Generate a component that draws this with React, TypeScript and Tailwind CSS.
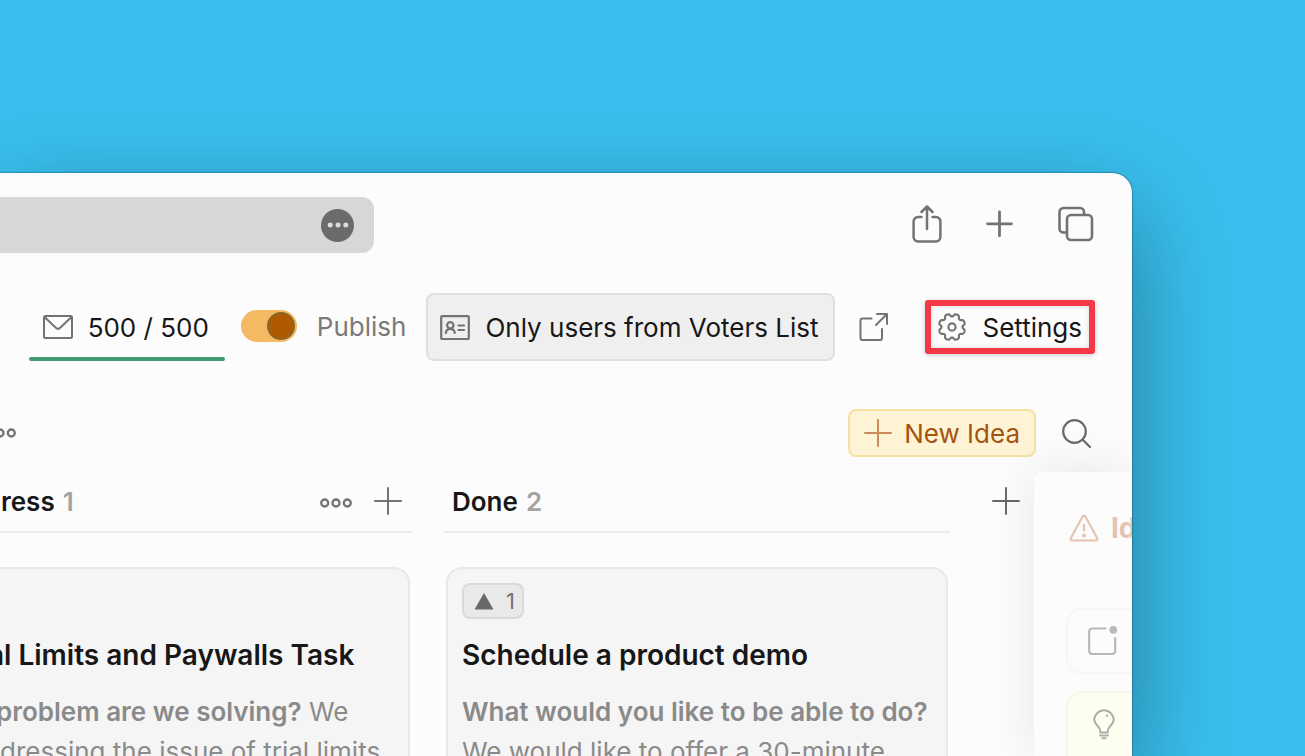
import React from "react";

type IconProps = { className?: string };

function Plus({ className = "" }: IconProps) {
  return (
    <svg viewBox="0 0 28 28" className={"size-7 shrink-0 " + className} fill="none" stroke="currentColor" strokeWidth="2" strokeLinecap="round">
      <path d="M14 1v26M1 14h26" />
    </svg>
  );
}

function Dots({ className = "" }: IconProps) {
  return (
    <svg viewBox="0 0 32 10" className={"h-[10px] w-8 shrink-0 " + className} fill="none" stroke="currentColor" strokeWidth="2.3">
      <circle cx="4.7" cy="5" r="3.5" />
      <circle cx="16" cy="5" r="3.5" />
      <circle cx="27.3" cy="5" r="3.5" />
    </svg>
  );
}

function gearPath() {
  const points: string[] = [];
  for (let i = 0; i <= 160; i++) {
    const t = (i / 160) * Math.PI * 2;
    const wave = -Math.cos(8 * t);
    const r = 11.8 + 1.5 * Math.tanh(1.7 * wave + 0.5);
    points.push(`${(15 + r * Math.sin(t)).toFixed(2)} ${(15 - r * Math.cos(t)).toFixed(2)}`);
  }
  return "M" + points.join("L") + "Z";
}

function Gear() {
  return (
    <svg viewBox="0 0 30 30" className="size-[30px] shrink-0 text-[#737373]" fill="none" stroke="currentColor" strokeWidth="2.1" strokeLinejoin="round">
      <path d={gearPath()} />
      <circle cx="15" cy="15" r="3.6" />
    </svg>
  );
}

function BrowserBar() {
  return (
    <div className="flex h-14 items-center justify-between pr-[38px]">
      <div className="flex h-14 w-[374px] items-center justify-end rounded-r-xl bg-[#d7d7d7] pr-5">
        <button aria-label="Page options" className="flex size-[33px] items-center justify-center rounded-full bg-[#6b6b6b] text-[#dcdcdc]">
          <svg viewBox="0 0 22 6" className="h-[6px] w-[22px]" fill="currentColor">
            <circle cx="3.2" cy="3" r="2.5" />
            <circle cx="11" cy="3" r="2.5" />
            <circle cx="18.8" cy="3" r="2.5" />
          </svg>
        </button>
      </div>
      <div className="flex items-center gap-11 pb-[3px] text-[#737373]">
        <button aria-label="Share">
          <svg viewBox="0 0 30 38" className="h-[38px] w-[30px]" fill="none" stroke="currentColor" strokeWidth="2.5" strokeLinecap="round" strokeLinejoin="round">
            <path d="M9.500 12H6a4.400 4.400 0 0 0-4.400 4.400v15.700A4.400 4.400 0 0 0 6 36.500h18a4.400 4.400 0 0 0 4.400-4.400V16.400A4.400 4.400 0 0 0 24 12h-3.500M15 24V1.500M9.500 7L15 1.500 20.500 7" />
          </svg>
        </button>
        <button aria-label="New tab">
          <svg viewBox="0 0 28 28" className="size-7" fill="none" stroke="currentColor" strokeWidth="2.800" strokeLinecap="round">
            <path d="M13.500 1.800v24M1.500 13.800h24" />
          </svg>
        </button>
        <button aria-label="Show all tabs">
          <svg viewBox="0 0 36 36" className="size-9" fill="none" stroke="currentColor" strokeWidth="2.6" strokeLinecap="round">
            <rect x="9" y="9" width="25" height="25" rx="4" />
            <path d="M26 8.500V6a4 4 0 0 0-4-4H5.500a4 4 0 0 0-4 4v16.500a4 4 0 0 0 4 4H8.500" />
          </svg>
        </button>
      </div>
    </div>
  );
}

function Toolbar() {
  return (
    <div className="mt-10 flex h-[68px] items-center justify-end pr-[37px] text-[26px] text-[#171717]">
      <button className="flex h-[68px] flex-col whitespace-nowrap">
        <span className="flex flex-1 items-center gap-[15px] pt-1 pr-4 pl-[14px]">
          <svg viewBox="0 0 30 24" className="h-6 w-[30px] text-[#737373]" fill="none" stroke="currentColor" strokeWidth="2" strokeLinejoin="round">
            <rect x="1" y="1" width="28" height="22" rx="1.500" />
            <path d="M1.500 2l11.300 10.800a3.200 3.200 0 0 0 4.400 0L28.500 2" />
          </svg>
          500 / 500
        </span>
        <span className="h-1 w-full rounded-sm bg-[#429b73]" />
      </button>
      <label className="ml-4 flex items-center gap-5 pb-[2px] text-[#7a7a7a]">
        <input
          type="checkbox"
          role="switch"
          defaultChecked
          className="h-8 w-14 appearance-none rounded-full bg-[#d7d7d7] p-[2px] before:block before:size-7 before:rounded-full before:border-2 before:border-[#8c6429] before:bg-[#b05a00] checked:bg-[#f3ba63] checked:before:translate-x-6"
        />
        Publish
      </label>
      <button className="ml-5 flex h-[68px] items-center gap-[15px] rounded-lg border-2 border-[#dfdfdf] bg-[#efefef] pr-[15px] pl-3 whitespace-nowrap">
        <svg viewBox="0 0 30 26" className="h-[26px] w-[30px] text-[#737373]" fill="none" stroke="currentColor" strokeWidth="2.2" strokeLinecap="round" strokeLinejoin="round">
          <rect x="1.200" y="2.200" width="27.600" height="22.800" rx="1" />
          <circle cx="10.300" cy="11.300" r="3.200" />
          <path d="M5.800 19c.3-2.600 2-4.200 4.500-4.200s4.200 1.600 4.500 4.200M18.500 11.500h5.500M18.500 16h5.500" />
        </svg>
        Only users from Voters List
      </button>
      <button aria-label="Open in new window" className="ml-6 text-[#737373]">
        <svg viewBox="0 0 30 30" className="size-[30px]" fill="none" stroke="currentColor" strokeWidth="2" strokeLinecap="round" strokeLinejoin="round">
          <path d="M12.500 6.500H3.500a2 2 0 0 0-2 2v17.500a2 2 0 0 0 2 2h17.500a2 2 0 0 0 2-2V17M18 2h10v10M27.500 2.500L17 13" />
        </svg>
      </button>
      <button className="ml-9 flex h-[54px] items-center gap-[15px] rounded-[3px] border-6 border-[#f43848] pr-[7px] pl-[6px] shadow-[0_1px_5px_rgba(0,0,0,0.2),inset_0_0_5px_rgba(0,0,0,0.15)]">
        <Gear />
        Settings
      </button>
    </div>
  );
}

function BoardBar() {
  return (
    <div className="mt-12 flex h-12 items-center pr-10">
      <button aria-label="Board menu" className="-ml-4 text-[#737373]">
        <Dots />
      </button>
      <button className="ml-auto flex h-12 items-center gap-3 rounded-lg border-2 border-[#f6df9f] bg-[#fff3d6] px-[14px] text-[26px] whitespace-nowrap text-[#a4540d]">
        <Plus className="text-[#cc8c58]" />
        New Idea
      </button>
      <button aria-label="Search" className="ml-[26px] pt-px text-[#696969]">
        <svg viewBox="0 0 30 30" className="size-[30px]" fill="none" stroke="currentColor" strokeWidth="2.2" strokeLinecap="round">
          <circle cx="12.500" cy="12.500" r="11.300" />
          <path d="M21 21l7 7" />
        </svg>
      </button>
    </div>
  );
}

function ColumnHeader({ title, count, children, className }: { title: string; count: number; children?: React.ReactNode; className: string }) {
  return (
    <header className={"flex h-[62px] items-center justify-between border-b-2 border-[#ebebeb] pt-[2px] text-[26px] " + className}>
      <h2 className="flex gap-2 font-semibold text-[#171717]">
        {title} <span className="text-[#a3a3a3]">{count}</span>
      </h2>
      {children}
    </header>
  );
}

function Board() {
  return (
    <main className="mt-[14px] flex min-h-0 flex-1 gap-8 text-[26px] leading-10">
      <section className="flex w-[412px] shrink-0 flex-col">
        <ColumnHeader title="ress" count={1} className="pr-[10px] pl-px">
          <div className="flex items-center gap-[22px] text-[#737373]">
            <button aria-label="Column menu" className="pt-[2px]"><Dots /></button>
            <button aria-label="Add idea" className="pb-[2px]"><Plus /></button>
          </div>
        </ColumnHeader>
        <article className="mt-[34px] mr-[2px] min-h-0 flex-1 rounded-tr-2xl border-t-2 border-r-2 border-[#e8e8e8] bg-[#f5f5f5] pt-[66px] whitespace-nowrap">
          <h3 className="-ml-3 text-[28px] font-semibold text-[#171717]">al Limits and Paywalls Task</h3>
          <p className="mt-[17px] text-[#8a8a8a]">
            <strong className="-ml-1 font-semibold">problem are we solving?</strong> We
            <br />
            dressing the issue of trial limits
          </p>
        </article>
      </section>
      <section className="flex w-[506px] shrink-0 flex-col">
        <ColumnHeader title="Done" count={2} className="pl-2" />
        <article className="mx-[2px] mt-[34px] min-h-0 flex-1 rounded-t-2xl border-2 border-b-0 border-[#e8e8e8] bg-[#f5f5f5] px-[14px] pt-[14px] whitespace-nowrap">
          <button className="flex h-9 items-center gap-3 rounded-lg border-2 border-[#d9d9d9] bg-[#e9e9e9] pr-[7px] pl-[10px] text-[22px] text-[#737373]">
            <svg viewBox="0 0 20 18" className="h-[18px] w-5 text-[#696969]" fill="currentColor">
              <path d="M10 1l9.500 16.500H.5z" />
            </svg>
            1
          </button>
          <h3 className="mt-4 text-[28px] font-semibold text-[#171717]">Schedule a product demo</h3>
          <p className="mt-[17px] text-[#8a8a8a]">
            <strong className="font-semibold">What would you like to be able to do?</strong>
            <br />
            We would like to offer a 30-minute
          </p>
        </article>
      </section>
      <button aria-label="Add column" className="ml-[10px] h-[60px] self-start text-[#696969]">
        <Plus />
      </button>
    </main>
  );
}

function IdeaPanel() {
  return (
    <aside className="absolute top-[299px] right-0 bottom-0 w-[98px] rounded-tl-lg bg-[#fcfcfc] pl-8 shadow-[0_0_50px_rgba(0,0,0,0.09)]">
      <header className="flex h-[113px] items-center gap-3 border-b-2 border-[#f8f8f8] text-[28px] font-bold text-[#e4c4b0]">
        <svg viewBox="0 0 30 28" className="ml-[3px] h-7 w-[30px] shrink-0" fill="none" stroke="currentColor" strokeWidth="2.2" strokeLinecap="round" strokeLinejoin="round">
          <path d="M13.800 2.200L1.700 24.300A1.500 1.500 0 0 0 3 26.500h24a1.500 1.500 0 0 0 1.300-2.200L16.200 2.200a1.400 1.400 0 0 0-2.400 0zM15 10.500v6" />
          <circle cx="15" cy="21.500" r="0.8" fill="currentColor" />
        </svg>
        Id
      </header>
      <div className="mt-[23px] flex h-[66px] items-center rounded-l-2xl border-2 border-r-0 border-[#f6f6f6] pb-px pl-5 text-[#b8b8b8]">
        <svg viewBox="0 0 30 30" className="size-[30px] shrink-0" fill="none" stroke="currentColor" strokeWidth="2.2" strokeLinecap="round">
          <path d="M17.500 2.500H4.200a3 3 0 0 0-3 3v19.500a3 3 0 0 0 3 3h20a3 3 0 0 0 3-3V12" />
          <circle cx="25.300" cy="3.900" r="3.800" fill="currentColor" stroke="none" />
        </svg>
      </div>
      <div className="mt-[17px] h-20 rounded-tl-2xl border-t-2 border-l-2 border-[#f7f7ea] bg-[#fdfdf0] pt-4 pl-6 text-[#b0b0ac]">
        <svg viewBox="0 0 24 32" className="h-8 w-6" fill="none" stroke="currentColor" strokeWidth="2.100" strokeLinecap="round" strokeLinejoin="round">
          <path d="M8.300 23.500v-1.500c0-2.500-1.500-3.700-3.300-5.800A9.400 9.400 0 0 1 2.300 11a9.700 9.700 0 0 1 19.400 0A9.400 9.400 0 0 1 19 16.200c-1.800 2.100-3.300 3.300-3.300 5.800v1.500zM8 26.500h8M10.500 29.300h3" />
          <circle cx="15" cy="6.800" r="1.200" fill="currentColor" stroke="none" />
        </svg>
      </div>
    </aside>
  );
}

export default function App() {
  return (
    <div className="flex h-screen overflow-hidden bg-[#39bfed] pt-[173px] pr-[173px] font-['Inter',sans-serif]">
      <div className="min-w-0 flex-1 rounded-tr-[20px] shadow-[0_0_2px_rgba(0,0,0,0.7),0_36px_100px_rgba(0,0,0,0.36)]">
        <div className="relative flex h-full flex-col overflow-hidden rounded-tr-[20px] bg-[#fcfcfc] pt-6">
          <BrowserBar />
          <Toolbar />
          <BoardBar />
          <Board />
          <IdeaPanel />
        </div>
      </div>
    </div>
  );
}
